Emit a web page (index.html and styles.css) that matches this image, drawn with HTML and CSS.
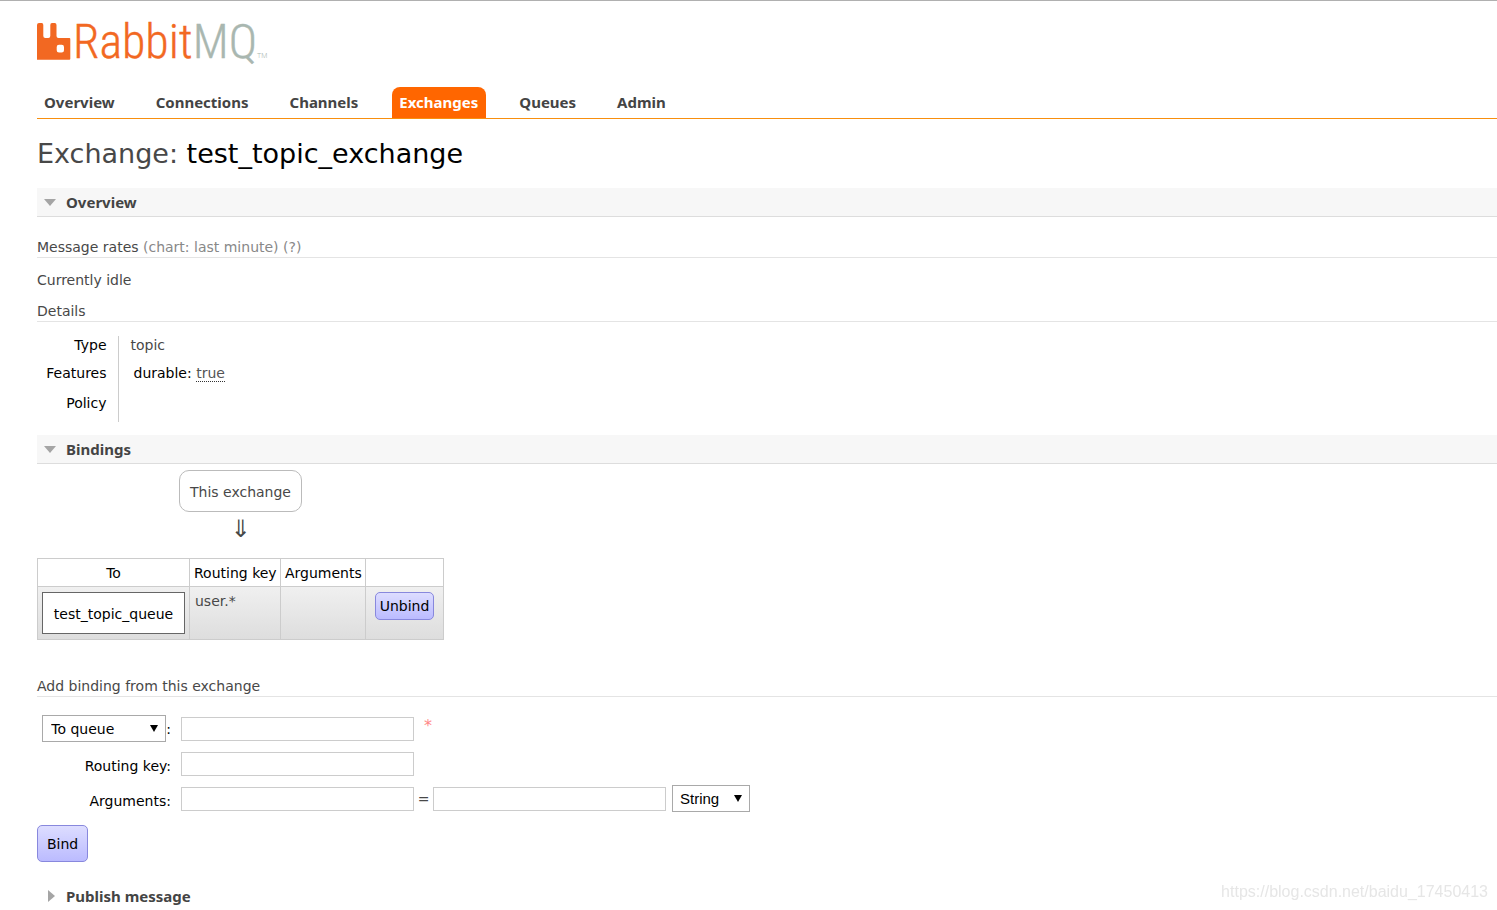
FILE: index.html
```html
<!DOCTYPE html>
<html lang="en">
<head>
<meta charset="utf-8">
<title>RabbitMQ Management</title>
<link rel="stylesheet" href="styles.css">
</head>
<body>
<header class="header">
  <a class="logo" href="#" aria-label="RabbitMQ">
    <svg class="logo-art" width="240" height="66" viewBox="0 -14 240 66">
      <path class="logo-mark" fill-rule="evenodd" d="M0 3Q0 1 2 1H4.700Q6.300 1 6.300 3V14Q6.300 16 8.300 16H11.300Q13.300 16 13.300 14V3Q13.300 1 15 1H17.700Q19.500 1 19.500 3V14Q19.500 16 21.500 16H32.300Q33.300 16 33.300 17V36.700Q33.300 37.700 32.300 37.700H0ZM22 22.700Q19.700 22.700 19.700 25V28.300Q19.700 30.600 22 30.600H24.700Q27 30.600 27 28.300V25Q27 22.700 24.700 22.700Z"/>
      <text class="logo-text" x="36" y="36">Rabbit<tspan class="logo-mq">MQ</tspan></text>
      <text class="logo-tm" x="220" y="36">TM</text>
    </svg>
  </a>
  <nav class="tabs">
    <a class="tab" href="#">Overview</a>
    <a class="tab" href="#">Connections</a>
    <a class="tab" href="#">Channels</a>
    <a class="tab active" href="#">Exchanges</a>
    <a class="tab" href="#">Queues</a>
    <a class="tab" href="#">Admin</a>
  </nav>
</header>
<main class="main">
  <h1 class="title">Exchange: <b class="title-name">test_topic_exchange</b></h1>

  <h2 class="section open">Overview</h2>
  <h3 class="sub">Message rates <span class="hint">(chart: last minute) (?)</span></h3>
  <p class="status">Currently idle</p>
  <h3 class="sub">Details</h3>
  <table class="facts">
    <tr><th scope="row">Type</th><td>topic</td></tr>
    <tr class="tall"><th scope="row">Features</th><td><span class="feature">durable: <abbr class="term" title="durable">true</abbr></span></td></tr>
    <tr><th scope="row">Policy</th><td></td></tr>
  </table>

  <h2 class="section open">Bindings</h2>
  <div class="bindings">
    <span class="node exchange">This exchange</span>
    <span class="arrow">⇓</span>
    <table class="list">
      <colgroup><col class="col-to"><col class="col-key"><col class="col-args"><col class="col-action"></colgroup>
      <thead><tr><th>To</th><th>Routing key</th><th>Arguments</th><th></th></tr></thead>
      <tbody><tr>
        <td><a class="node queue" href="#">test_topic_queue</a></td>
        <td>user.*</td>
        <td></td>
        <td class="action"><button class="btn" type="button">Unbind</button></td>
      </tr></tbody>
    </table>
  </div>

  <h3 class="sub">Add binding from this exchange</h3>
  <form class="bind-form">
    <div class="fields">
      <div class="label kind"><span class="select"><select aria-label="Destination type"><option>To queue</option><option>To exchange</option></select></span>:</div>
      <div class="value"><input class="text" type="text" aria-label="Destination"><span class="required">*</span></div>
      <label class="label" for="key">Routing key:</label>
      <div class="value"><input class="text" id="key" type="text"></div>
      <label class="label" for="arg">Arguments:</label>
      <div class="value"><input class="text" id="arg" type="text"><span class="equals">=</span><input class="text" type="text" aria-label="Argument value"><span class="select type"><select aria-label="Argument type"><option>String</option><option>Number</option></select></span></div>
    </div>
    <button class="btn large" type="button">Bind</button>
  </form>

  <h2 class="section closed">Publish message</h2>
</main>
<div class="watermark">https://blog.csdn.net/baidu_17450413</div>
</body>
</html>
```
FILE: styles.css
```css
* { box-sizing: border-box; }
body {
  margin: 0;
  border-top: 1px solid #b0b0b0;
  background: #fff;
  color: #484848;
  font: 14px/18px "DejaVu Sans", Verdana, sans-serif;
}
a { color: inherit; text-decoration: none; }

.header { margin-left: 37px; }
.logo { display: block; padding-top: 7px; }
.logo-art { display: block; }
.logo-mark { fill: #f26822; }
.logo-text { font: 300 48px "Roboto Condensed", Roboto, sans-serif; fill: #f26822; stroke: #f26822; stroke-width: 0.4; }
.logo-mq { fill: #a9b7b0; stroke: #a9b7b0; }
.logo-tm { font: 300 7px Roboto, sans-serif; fill: #a9b7b0; }
.tabs {
  display: flex;
  gap: 26px;
  margin-top: 13px;
  border-bottom: 1px solid #f88f0e;
}
.tab {
  padding: 0 8px 0 7px;
  border-radius: 8px 8px 0 0;
  font: bold 15px/31px "Noto Sans", sans-serif;
  color: #444;
}
.tab.active { background: #f60; color: #fff; }

.main { margin-left: 37px; }
.title {
  margin: 18px 0 17px;
  font-size: 27px;
  line-height: 34px;
  font-weight: normal;
}
.title-name { font-weight: normal; color: #000; }
.section {
  display: flex;
  align-items: center;
  margin: 0;
  padding-left: 7px;
  font: bold 15px/28px "Noto Sans", sans-serif;
  color: #444;
}
.section::before { content: ""; border: 0 solid transparent; }
.open { background: #f7f7f7; border-bottom: 1px solid #ddd; }
.open::before { border-width: 7px 6px 0; border-top-color: #a5a5a5; margin-right: 10px; }
.closed { margin-top: 20px; padding-left: 11px; }
.closed::before { border-width: 6px 0 6px 7px; border-left-color: #a5a5a5; margin-right: 11px; }

.sub {
  margin: 21px 0 0;
  padding-bottom: 1px;
  border-bottom: 1px solid #e4e4e4;
  font-size: 14px;
  font-weight: normal;
}
.hint { color: #888; }
.status { margin: 13px 0; }
.status + .sub { margin-top: 0; }

.facts { margin: 14px 0 13px; border-collapse: collapse; }
.facts th {
  width: 81px;
  height: 28px;
  padding: 0 11px 0 0;
  border-right: 1px solid #ccc;
  vertical-align: top;
  text-align: right;
  font-weight: normal;
  color: #000;
}
.facts .tall th { height: 30px; }
.facts td { padding: 0 0 0 12px; vertical-align: top; }
.feature { padding-left: 3px; color: #000; }
.term { color: #555; text-decoration: none; border-bottom: 1px dotted #333; }

.bindings {
  display: flex;
  flex-direction: column;
  align-items: center;
  width: max-content;
  padding: 6px 0 16px;
}
.node { display: block; padding: 11px; border: 1px solid #bbb; background: #fff; text-align: center; }
.exchange { padding: 12px 10px 10px; border-radius: 10px; }
.queue { padding: 12px 0 10px; border-color: #666; color: #000; }
.arrow { margin: 3px 0 15px; font-size: 24px; line-height: 28px; }

.list { table-layout: fixed; width: 407px; border-collapse: collapse; }
.col-to { width: 152px; }
.col-key { width: 91px; }
.col-args { width: 85px; }
.col-action { width: 78px; }
.list th, .list td { padding: 5px 4px; border: 1px solid #ccc; vertical-align: top; }
.list th { padding-bottom: 4px; font-weight: normal; color: #000; text-align: center; white-space: nowrap; }
.list tbody tr { background: linear-gradient(#f0f0f0, #ddd); }
.list td:nth-child(2) { padding-left: 5px; }
.list .action { text-align: center; }

.btn {
  padding: 4px;
  border: 1px solid #8888dd;
  border-radius: 5px;
  background: linear-gradient(#ddf, #bbf);
  font: 14px/18px "DejaVu Sans", Verdana, sans-serif;
  color: #000;
}
.large { padding: 9px 9px 8px; }

.fields {
  display: grid;
  grid-template-columns: 134px 1fr;
  grid-auto-rows: 27px;
  gap: 8px 10px;
  align-items: center;
  margin: 18px 0 13px;
}
.label { text-align: right; padding-top: 5px; color: #000; }
.kind { display: flex; justify-content: flex-end; align-items: center; padding-top: 0; }
.value { display: flex; align-items: center; }
.text { width: 233px; height: 24px; padding: 3px; border: 1px solid #ccc; font: inherit; }
.required { margin-left: 10px; padding-bottom: 6px; font-size: 16px; color: #f88; }
.equals { width: 19px; text-align: center; }
.select { position: relative; }
.select::after {
  content: "";
  position: absolute;
  top: 10px;
  right: 8px;
  border: 4px solid transparent;
  border-top: 7px solid #000;
  border-bottom: 0;
  pointer-events: none;
}
.select select {
  display: block;
  width: 124px;
  height: 27px;
  padding: 0 8px;
  border: 1px solid #a9a9a9;
  border-radius: 0;
  appearance: none;
  background: #fff;
  font: 14px "DejaVu Sans", sans-serif;
  color: #000;
}
.type { margin-left: 6px; }
.type select { width: 78px; padding: 0 7px; font: 15px "Liberation Sans", Arial, sans-serif; }

.watermark {
  position: fixed;
  right: 9px;
  bottom: 9px;
  font: 16px/18px "Liberation Sans", Arial, sans-serif;
  color: #e6e6e6;
}
```
